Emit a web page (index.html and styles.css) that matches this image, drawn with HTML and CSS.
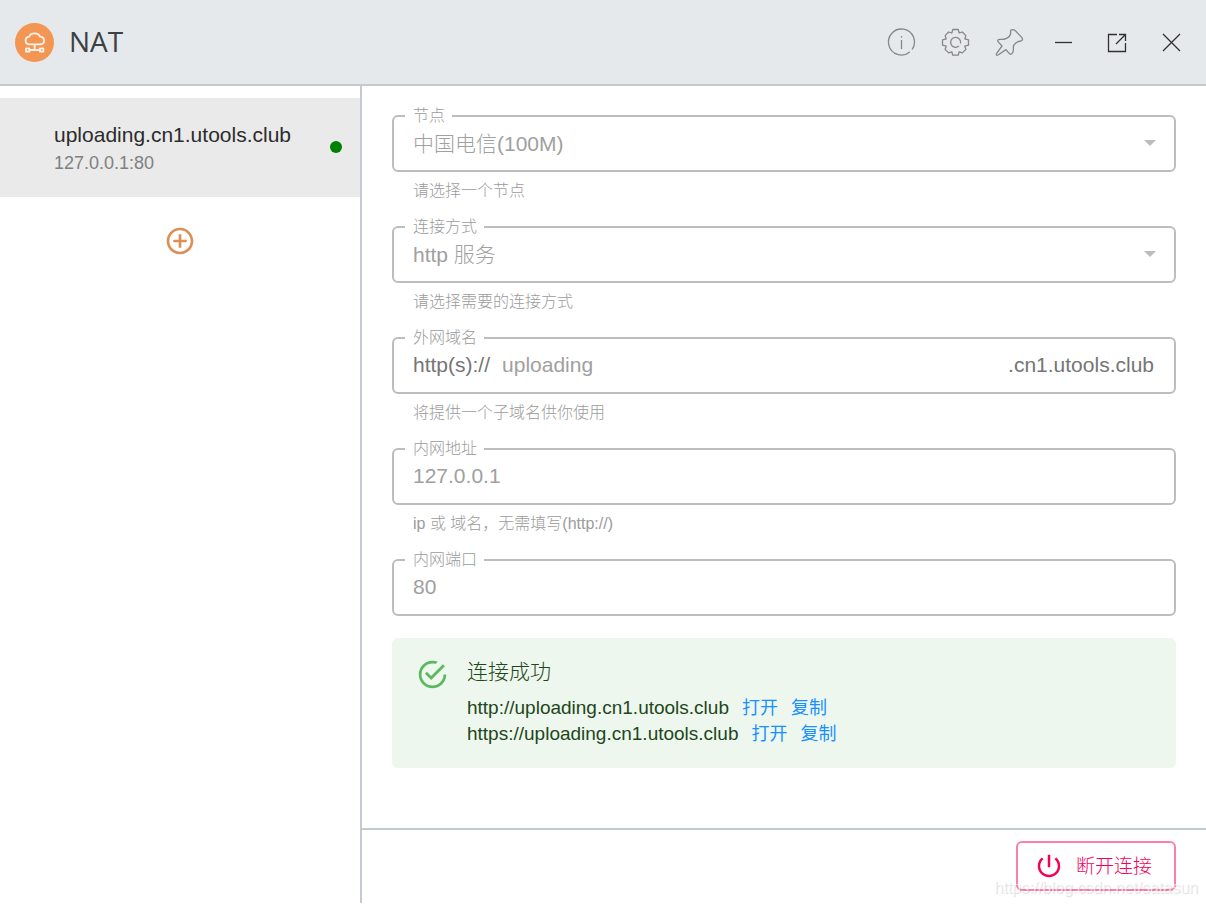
FILE: index.html
```html
<!DOCTYPE html>
<html lang="zh-CN">
<head>
<meta charset="utf-8">
<meta name="viewport" content="width=device-width, initial-scale=1">
<title>NAT</title>
<link rel="stylesheet" href="styles.css">
</head>
<body>
<div class="app">
  <header class="titlebar">
    <svg class="logo" viewBox="45 69 117 117" aria-hidden="true">
      <circle cx="103.500" cy="127.500" r="58.500" fill="#f39653"/>
      <g fill="none" stroke="#fff3e8" stroke-width="5.500" stroke-linejoin="round">
        <path d="M89 133C73 133 73 112 88 110C91 97 116 97 120 110C137 112 136 133 120 133Z"/>
        <path d="M104 133V150M90 150H118"/>
        <path d="M78 145H88V155H78ZM120 145H130V155H120Z"/>
      </g>
    </svg>
    <h1 class="app-name">NAT</h1>
    <nav class="tools" aria-label="窗口">
      <button class="tool" aria-label="信息">
        <svg viewBox="0 0 54 54"><path d="M35.800 37A13 13 0 1 1 38.100 34.500"/><path d="M27.500 21V22.500M27.500 25V34"/></svg>
      </button>
      <button class="tool" aria-label="设置">
        <svg viewBox="0 0 54 54"><g transform="translate(27.500 27.500)"><path stroke-linejoin="round" d="M-2.700-13H2.700L3.700-9.500L6.800-10.500L10.400-6.900L9.300-3.700L13-2.700V2.700L9.300 3.700L10.400 6.900L6.800 10.400L3.700 9.300L2.700 12.700H-2.700L-3.700 9.300L-6.800 10.400L-10.400 6.900L-9.300 3.700L-13 2.700V-2.700L-9.300-3.700L-10.400-6.900L-6.800-10.500L-3.700-9.500Z"/><path d="M3.400 3.600A5 5 0 1 1 5 1"/></g></svg>
      </button>
      <button class="tool" aria-label="置顶">
        <svg viewBox="0 0 54 54"><g transform="translate(-112 -15) scale(.3333)"><path stroke-width="3.900" stroke-linejoin="round" d="M422 91Q429 86 436 92L455 112Q461 120 453 123C441 124 431 132 430 141C431 154 428 163 422 163Q418 162 408 149L384 165Q377 168 380 160L396 138L384 125Q381 119 389 118C402 120 420 114 422 100Z"/></g></svg>
      </button>
      <button class="tool dark" aria-label="最小化">
        <svg viewBox="0 0 54 54"><path d="M19 27.500H36"/></svg>
      </button>
      <button class="tool dark" aria-label="分离窗口">
        <svg viewBox="0 0 54 54"><path d="M27 19.500H18.500V36.500H35.500V28M26 29L35 20M29 19.500H35.500V26"/></svg>
      </button>
      <button class="tool dark" aria-label="关闭">
        <svg viewBox="0 0 54 54"><path d="M19 19L36 36M36 19L19 36"/></svg>
      </button>
    </nav>
  </header>

  <div class="body">
    <aside class="sidebar">
      <button class="tunnel">
        <span class="tunnel-text">
          <span class="tunnel-host">uploading.cn1.utools.club</span>
          <span class="tunnel-addr">127.0.0.1:80</span>
        </span>
        <span class="status"></span>
      </button>
      <button class="add" aria-label="添加">
        <svg viewBox="0 0 24 24"><path d="M13 7h-2v4H7v2h4v4h2v-4h4v-2h-4V7zm-1-5C6.480 2 2 6.480 2 12s4.480 10 10 10 10-4.480 10-10S17.520 2 12 2zm0 18c-4.410 0-8-3.590-8-8s3.590-8 8-8 8 3.590 8 8-3.590 8-8 8z"/></svg>
      </button>
    </aside>

    <main class="main">
      <form class="form">
        <fieldset class="field">
          <legend><label for="node">节点</label></legend>
          <div class="control">
            <select id="node" disabled><option>中国电信(100M)</option></select>
            <svg class="arrow" viewBox="0 0 12 6"><path d="M0 0H12L6 6Z"/></svg>
          </div>
        </fieldset>
        <p class="hint">请选择一个节点</p>

        <fieldset class="field">
          <legend><label for="mode">连接方式</label></legend>
          <div class="control">
            <select id="mode" disabled><option>http 服务</option></select>
            <svg class="arrow" viewBox="0 0 12 6"><path d="M0 0H12L6 6Z"/></svg>
          </div>
        </fieldset>
        <p class="hint">请选择需要的连接方式</p>

        <fieldset class="field">
          <legend><label for="domain">外网域名</label></legend>
          <div class="control">
            <span class="affix">http(s)://</span>
            <input id="domain" type="text" value="uploading" disabled>
            <span class="affix">.cn1.utools.club</span>
          </div>
        </fieldset>
        <p class="hint">将提供一个子域名供你使用</p>

        <fieldset class="field">
          <legend><label for="host">内网地址</label></legend>
          <div class="control"><input id="host" type="text" value="127.0.0.1" disabled></div>
        </fieldset>
        <p class="hint">ip 或 域名，无需填写(http://)</p>

        <fieldset class="field">
          <legend><label for="port">内网端口</label></legend>
          <div class="control"><input id="port" type="text" value="80" disabled></div>
        </fieldset>

        <section class="alert">
          <svg class="alert-icon" viewBox="0 0 24 24"><path d="M20,12A8,8 0 0,1 12,20A8,8 0 0,1 4,12A8,8 0 0,1 12,4C12.760,4 13.500,4.110 14.200,4.310L15.770,2.740C14.610,2.260 13.340,2 12,2A10,10 0 0,0 2,12A10,10 0 0,0 12,22A10,10 0 0,0 22,12M7.910,10.080L6.500,11.500L11,16L21,6L19.590,4.580L11,13.170L7.910,10.080Z"/></svg>
          <div class="alert-text">
            <h2>连接成功</h2>
            <p class="url">http://uploading.cn1.utools.club <a href="#open-http">打开</a> <a href="#copy-http">复制</a></p>
            <p class="url">https://uploading.cn1.utools.club <a href="#open-https">打开</a> <a href="#copy-https">复制</a></p>
          </div>
        </section>
      </form>

      <footer class="actions">
        <button class="disconnect">
          <svg viewBox="0 0 24 24"><path d="M13 3h-2v10h2V3zm4.830 2.170l-1.420 1.420C17.990 7.860 19 9.810 19 12c0 3.870-3.130 7-7 7s-7-3.130-7-7c0-2.190 1.010-4.140 2.580-5.420L6.170 5.170C4.230 6.820 3 9.260 3 12c0 4.970 4.030 9 9 9s9-4.030 9-9c0-2.740-1.230-5.180-3.170-6.830z"/></svg>
          <span class="disconnect-text">断开连接</span>
        </button>
      </footer>
    </main>
  </div>
  <span class="watermark">https://blog.csdn.net/satasun</span>
</div>
</body>
</html>
```

FILE: styles.css
```css
* {
  box-sizing: border-box;
}

body {
  margin: 0;
  padding-bottom: 3px;
  background: #fff;
  font-family: "Liberation Sans", "Noto Sans CJK SC", sans-serif;
  font-weight: 300;
}

h1,
h2,
p {
  margin: 0;
  font-weight: 300;
}

button,
input,
select {
  font: inherit;
  color: inherit;
  background: none;
  border: 0;
  padding: 0;
}

.app {
  position: relative;
  display: flex;
  flex-direction: column;
  min-height: calc(100vh - 3px);
}

.titlebar {
  display: flex;
  align-items: center;
  gap: 15px;
  height: 86px;
  padding: 0 8px 0 15px;
  background: #e6e9ec;
  border-bottom: 2px solid #c5c9d0;
}

.logo {
  width: 39px;
  height: 39px;
}

.app-name {
  padding-bottom: 2px;
  font-family: "Open Sans", "Noto Sans", sans-serif;
  font-size: 28px;
  font-weight: 400;
  line-height: 40px;
  color: #3c4043;
}

.tools {
  display: flex;
  margin-left: auto;
}

.tool {
  width: 54px;
  height: 54px;
}

.tool svg {
  display: block;
  fill: none;
  stroke: #858789;
  stroke-width: 1.3;
}

.tool.dark svg {
  stroke: #303133;
}

.body {
  display: flex;
  flex: 1;
}

.sidebar {
  display: flex;
  flex-direction: column;
  align-items: center;
  width: 362px;
  padding-top: 12px;
  border-right: 2px solid #c5c9d0;
}

.tunnel {
  display: flex;
  align-items: center;
  justify-content: space-between;
  align-self: stretch;
  height: 99px;
  padding: 0 18px 2px 54px;
  background: #eaeaea;
  text-align: left;
}

.tunnel-text {
  display: flex;
  flex-direction: column;
}

.tunnel-host {
  font-size: 21px;
  line-height: 32px;
  color: #2c2c2c;
}

.tunnel-addr {
  font-size: 18px;
  line-height: 24px;
  color: #808080;
}

.status {
  width: 12px;
  height: 12px;
  border-radius: 50%;
  background: #008000;
}

.add {
  width: 32px;
  height: 32px;
  margin-top: 28px;
}

.add svg {
  display: block;
  fill: #dc8e54;
}

.main {
  display: flex;
  flex: 1;
  flex-direction: column;
  min-width: 0;
}

.form {
  flex: 1;
  padding: 20px 30px;
}

.field {
  min-width: 0;
  margin: 0;
  padding: 0 20px 10px 11px;
  border: 2px solid #bdbdbd;
  border-radius: 6px;
}

.field legend {
  padding: 0 7px 0 8px;
  font-size: 16px;
  line-height: 20px;
  color: #9b9b9b;
}

.control {
  display: flex;
  align-items: center;
  gap: 12px;
  height: 34px;
  padding-left: 8px;
  font-size: 21px;
  color: #a0a0a0;
}

.control input,
.control select {
  flex: 1;
  min-width: 0;
  height: 34px;
  appearance: none;
  opacity: 1;
}

.affix {
  color: #757575;
}

.arrow {
  width: 12px;
  height: 6px;
  margin-right: -2px;
  fill: #bdbdbd;
}

.hint {
  margin: 9px 21px 16px;
  font-size: 16px;
  line-height: 20px;
  color: #9b9b9b;
}

.alert {
  display: flex;
  gap: 18px;
  margin-top: 22px;
  padding: 20px 24px 21px;
  border-radius: 6px;
  background: #edf7ed;
  color: #1e4620;
}

.alert-icon {
  width: 33px;
  height: 33px;
  fill: #5cb860;
}

.alert h2 {
  margin-bottom: 9px;
  font-size: 21px;
  line-height: 28px;
}

.url {
  display: flex;
  gap: 13px;
  font-size: 19px;
  line-height: 26px;
}

.url a {
  font-size: 18px;
  font-weight: 400;
  color: #1890ff;
  text-decoration: none;
}

.actions {
  display: flex;
  justify-content: flex-end;
  height: 75px;
  padding: 11px 30px;
  border-top: 2px solid #c5c9d0;
}

.disconnect {
  display: flex;
  align-items: center;
  gap: 12px;
  height: 50px;
  padding: 0 22px 0 16px;
  border: 2px solid #fa80aa;
  border-radius: 6px;
  font-size: 19px;
  color: #f50057;
}

.disconnect svg {
  width: 30px;
  height: 30px;
  fill: #f50057;
}

.disconnect-text {
  padding-bottom: 3px;
}

.watermark {
  position: absolute;
  right: 8px;
  bottom: 5px;
  font-size: 16px;
  line-height: 20px;
  color: rgba(255, 255, 255, 0.6);
  text-shadow: 1px 1px 1px rgba(0, 0, 0, 0.14);
}
```
